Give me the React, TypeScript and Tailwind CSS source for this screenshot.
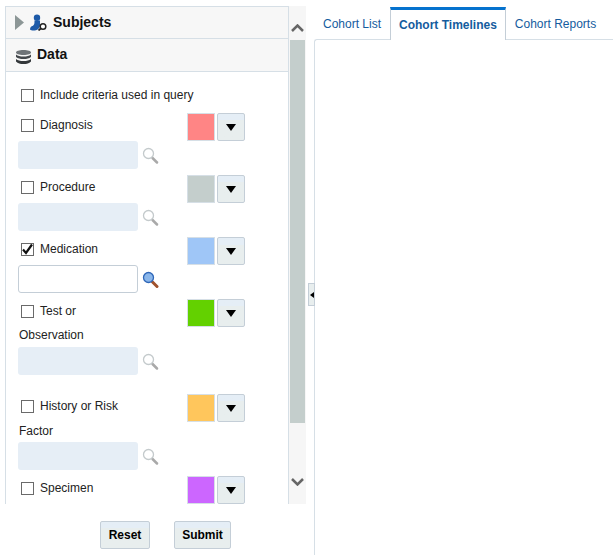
import React from 'react';

const FONT = 'font-["Liberation_Sans",Arial,sans-serif]';

const Magnifier = ({ active }: { active?: boolean }) => (
  <svg width="17" height="18" viewBox="0 0 17 18" className="block">
    <line x1="10.5" y1="11" x2="15" y2="15.500" stroke={active ? '#a0522d' : '#a9a9a9'} strokeWidth={active ? 3 : 2.500} strokeLinecap="round" />
    <circle cx="6.5" cy="6.5" r="5" fill={active ? '#8ab6ea' : '#ffffff'} stroke={active ? '#2f67b8' : '#c4cacc'} strokeWidth="1.300" />
  </svg>
);

const Swatch = ({ color }: { color: string }) => (
  <div className={`h-[28px] w-[28px] shrink-0 border border-[#d6dfe6] ${color}`} />
);

const ArrowButton = () => (
  <button className="flex h-[28px] w-[28px] shrink-0 items-center justify-center rounded-[2px] border border-[#c4ced7] bg-gradient-to-b from-[#e5eef6] from-[25%] to-[#e8eeee] to-[25%]">
    <svg width="10" height="7" viewBox="0 0 10 7" className="block">
      <path d="M0 0h10L5 7z" fill="#000" />
    </svg>
  </button>
);

const Check = ({ checked }: { checked?: boolean }) => (
  <span className="relative block h-[13px] w-[13px] shrink-0 border border-[#6a6a6a] bg-white">
    {checked && (
      <svg width="13" height="13" viewBox="0 0 13 13" className="absolute left-[-1px] top-[-1px]">
        <path d="M2 6.5l3 3.5 6-8.5" fill="none" stroke="#111" strokeWidth="2.2" />
      </svg>
    )}
  </span>
);

const Search = ({ active }: { active?: boolean }) => (
  <div className="flex h-[28px] items-center gap-[4px] pl-[12px]">
    <div className={`h-[28px] w-[120px] rounded-[3px] ${active ? 'border border-[#c4ced7] bg-white' : 'bg-[#e6eef6]'}`} />
    <div className="pt-[2px]">
      <Magnifier active={active} />
    </div>
  </div>
);

const Criteria = ({ label, extra, extraClass = '', color, checked, className = '' }: { label: string; extra?: string; extraClass?: string; color: string; checked?: boolean; className?: string }) => (
  <div className={className}>
    <div className="flex h-[28px]">
      <div className="flex w-[181px] items-start gap-[6px] pl-[15px] pt-[6px]">
        <Check checked={checked} />
        <span className="mt-[-2px] leading-[16px]">{label}</span>
      </div>
      <div className="flex gap-[2px]">
        <Swatch color={color} />
        <ArrowButton />
      </div>
    </div>
    {extra && <div className={`h-[20px] pl-[13px] leading-[16px] ${extraClass}`}>{extra}</div>}
    <Search active={checked} />
  </div>
);

const Header = ({ className, children }: { className: string; children: React.ReactNode }) => (
  <div className={`flex items-center border-b border-[#d6dfe6] bg-[#f7f7f7] text-[14px] font-bold text-[#111] ${className}`}>
    {children}
  </div>
);

const Tab = ({ label, active }: { label: string; active?: boolean }) => (
  <div
    className={
      active
        ? 'relative z-10 mb-[-1px] flex h-[33px] items-center border-x border-[#c4ced7] border-t-[3px] border-t-[#0572ce] bg-white px-[8px] font-bold text-[#145c9e]'
        : 'flex h-[32px] items-center px-[9px] pt-[2px] text-[#145c9e]'
    }
  >
    {label}
  </div>
);

export default function App() {
  return (
    <div className={`relative flex h-[555px] w-[613px] overflow-hidden bg-white text-[12px] text-[#222] ${FONT}`}>
      <div className="w-[314px] shrink-0 pl-[5px] pt-[6px]">
        <div className="flex h-[498px] overflow-hidden">
          <div className="h-full w-[284px] shrink-0 overflow-hidden border-x border-t border-[#d6dfe6]">
            <Header className="h-[32px]">
              <svg width="9" height="15" viewBox="0 0 9 15" className="ml-[9px]">
                <path d="M0 0l9 7.5L0 15z" fill="#8c9696" />
              </svg>
              <svg width="17" height="17" viewBox="0 0 17 17" className="ml-[6px]">
                <circle cx="7" cy="3.700" r="3.200" fill="#1d5aa8" />
                <path d="M4.500 6.500h5.500v4.500c0 2.500-1.500 4.500-4 5.200C3.500 16.900 1 16.500 0 15.500c0-2 1-3 3-3.700 1.500-1 1.500-3 1.500-5.300z" fill="#1d5aa8" />
                <circle cx="13" cy="12.500" r="2.800" fill="#fff" stroke="#222" strokeWidth="1.500" />
                <line x1="10.800" y1="14.500" x2="8.500" y2="16.500" stroke="#222" strokeWidth="1.700" />
              </svg>
              <span className="ml-[6px]">Subjects</span>
            </Header>
            <Header className="h-[33px]">
              <svg width="15" height="14" viewBox="0 0 15 14" className="ml-[10px] mt-[3px]">
                <path d="M0 2.500C0 1 3 0 7.500 0S15 1 15 2.500 12 5 7.500 5 0 4 0 2.500z" fill="#6f7478" />
                <path d="M0 4.500c2 1.500 4 2 7.500 2s5.500-.5 7.500-2v2.500c-2 1.500-4 2-7.500 2S2 8.500 0 7z" fill="#44484c" />
                <path d="M0 9c2 1.500 4 2 7.500 2s5.500-.5 7.500-2v2.500C13 13.500 11 14 7.500 14S2 13.500 0 11.500z" fill="#33373a" />
              </svg>
              <span className="ml-[6px] mt-[-1px]">Data</span>
            </Header>
            <div className="pt-[17px]">
              <div className="flex h-[14px] items-start gap-[6px] pl-[15px]">
                <Check />
                <span className="mt-[-2px] leading-[16px]">Include criteria used in query</span>
              </div>
              <div className="flex flex-col gap-[6px] pt-[10px]">
                <Criteria label="Diagnosis" color="bg-[#ff8585]" />
                <Criteria label="Procedure" color="bg-[#c4cecc]" />
                <Criteria label="Medication" color="bg-[#9fc6f7]" checked />
                <Criteria label="Test or" extra="Observation" color="bg-[#63d100]" />
                <Criteria label="History or Risk" extra="Factor" extraClass="pt-[1px]" color="bg-[#ffc65c]" className="mt-[13px]" />
                <Criteria label="Specimen" color="bg-[#cc66ff]" />
              </div>
            </div>
          </div>
          <div className="flex h-full w-[17px] shrink-0 flex-col bg-[#f6f6f6]">
            <div className="flex h-[34px] items-end justify-center pb-[8px]">
              <svg width="13" height="8" viewBox="0 0 13 8">
                <path d="M1 7l5.500-5.500L12 7" fill="none" stroke="#666" strokeWidth="2.500" />
              </svg>
            </div>
            <div className="ml-[1px] h-[383px] w-[15px] bg-[#c4cecc]" />
            <div className="flex flex-1 items-start justify-center pt-[55px]">
              <svg width="13" height="8" viewBox="0 0 13 8">
                <path d="M1 1l5.500 5.500L12 1" fill="none" stroke="#666" strokeWidth="2.500" />
              </svg>
            </div>
          </div>
        </div>
        <div className="flex gap-[24px] pl-[95px] pt-[17px]">
          <button className="h-[28px] w-[50px] rounded-[2px] border border-[#c4ced7] bg-gradient-to-b from-[#e5eef6] from-[25%] to-[#e8eeee] to-[25%] font-bold text-black">Reset</button>
          <button className="h-[28px] w-[57px] rounded-[2px] border border-[#c4ced7] bg-gradient-to-b from-[#e5eef6] from-[25%] to-[#e8eeee] to-[25%] font-bold text-black">Submit</button>
        </div>
      </div>

      <div className="flex min-w-0 flex-1 flex-col">
        <div className="flex h-[39px] shrink-0 items-end pt-[7px]">
          <Tab label="Cohort List" />
          <Tab label="Cohort Timelines" active />
          <Tab label="Cohort Reports" />
        </div>
        <div className="flex-1 rounded-tl-[3px] border-l border-t border-[#d6dfe6]" />
      </div>

      <div className="absolute left-[308px] top-[283px] flex h-[23px] w-[7px] items-center justify-center border border-[#c4ced7] bg-[#e8eeee]">
        <svg width="4" height="6" viewBox="0 0 4 6">
          <path d="M4 0v6L0 3z" fill="#000" />
        </svg>
      </div>
    </div>
  );
}
